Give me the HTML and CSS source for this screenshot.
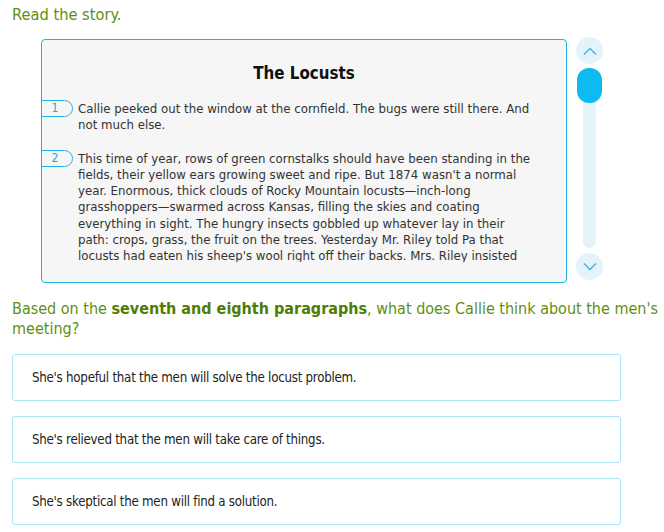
FILE: index.html
```html
<!DOCTYPE html>
<html>
<head>
<meta charset="utf-8">
<link rel="stylesheet" href="styles.css">
</head>
<body>
<div class="page">
  <p class="prompt">Read the story.</p>
  <div class="reader">
    <div class="passage">
      <div class="passage-scroll">
        <h2 class="title">The Locusts</h2>
        <div class="para">
          <span class="num">1</span>
          <p class="para-text">Callie peeked out the window at the cornfield. The bugs were still there. And not much else.</p>
        </div>
        <div class="para">
          <span class="num">2</span>
          <p class="para-text">This time of year, rows of green cornstalks should have been standing in the fields, their yellow ears growing sweet and ripe. But 1874 wasn't a normal year. Enormous, thick clouds of Rocky Mountain locusts—inch-long grasshoppers—swarmed across Kansas, filling the skies and coating everything in sight. The hungry insects gobbled up whatever lay in their path: crops, grass, the fruit on the trees. Yesterday Mr. Riley told Pa that locusts had eaten his sheep's wool right off their backs. Mrs. Riley insisted</p>
        </div>
      </div>
    </div>
    <div class="scroller">
      <button class="scroll-btn" aria-label="Scroll up">
        <svg width="14" height="8" viewBox="0 0 14 8"><path d="M1 7.5 L7 1.5 L13 7.5" fill="none" stroke="#3fb2e6" stroke-width="1.4"/></svg>
      </button>
      <div class="track"><div class="thumb"></div></div>
      <button class="scroll-btn" aria-label="Scroll down">
        <svg width="14" height="8" viewBox="0 0 14 8"><path d="M1 0.5 L7 6.5 L13 0.5" fill="none" stroke="#3fb2e6" stroke-width="1.4"/></svg>
      </button>
    </div>
  </div>
  <p class="question">Based on the <b>seventh and eighth paragraphs</b>, what does Callie think about the men's meeting?</p>
  <div class="choices">
    <div class="choice">She's hopeful that the men will solve the locust problem.</div>
    <div class="choice">She's relieved that the men will take care of things.</div>
    <div class="choice">She's skeptical the men will find a solution.</div>
  </div>
</div>
</body>
</html>
```

FILE: styles.css
```css
* { box-sizing: border-box; }
html, body { margin: 0; padding: 0; background: #fff; }
body { font-family: "DejaVu Sans Condensed", "DejaVu Sans", sans-serif; }
.page { padding: 5px 6px 0 12px; width: 664px; }
.prompt {
  margin: 0;
  font-size: 16.3px;
  line-height: 20px;
  color: #5f8f0f;
}
.reader {
  display: flex;
  margin-top: 14px;
  margin-left: 29px;
}
.passage {
  width: 526px;
  height: 244px;
  border: 1px solid #1fb4e8;
  border-radius: 4px;
  background: #f6f6f6;
  padding: 22px 0 20px 0;
}
.passage-scroll {
  height: 200px;
  overflow: hidden;
}
.title {
  margin: 0 0 17px 0;
  text-align: center;
  font-size: 16.8px;
  line-height: 22px;
  font-weight: bold;
  color: #111;
}
.para {
  display: flex;
  align-items: flex-start;
  margin-bottom: 17px;
}
.num {
  flex: none;
  width: 32px;
  height: 17px;
  margin-left: -1px;
  margin-top: -1px;
  border: 1px solid #1fb4e8;
  border-radius: 0 9px 9px 0;
  color: #1fa8e0;
  font-size: 12px;
  line-height: 15px;
  text-align: center;
  padding-right: 4px;
  background: #f6f6f6;
}
.para-text {
  margin: 0 0 0 5px;
  width: 460px;
  font-size: 13.1px;
  line-height: 16.3px;
  color: #333;
}
.scroller {
  display: flex;
  flex-direction: column;
  align-items: center;
  margin-left: 9px;
  width: 27px;
  margin-top: -2px;
}
.scroll-btn {
  width: 27px;
  height: 27px;
  border-radius: 50%;
  border: 0;
  padding: 0;
  background: #e4f3fa;
  display: flex;
  align-items: center;
  justify-content: center;
}
.track {
  width: 13px;
  height: 180px;
  margin: 4px 0 5px 0;
  background: #e4f3fa;
  border-radius: 7px;
  display: flex;
  justify-content: center;
}
.thumb {
  flex: none;
  width: 25px;
  height: 35px;
  border-radius: 12px;
  background: #0dbbf2;
}
.question {
  margin: 16px 0 0 0;
  font-size: 16px;
  line-height: 20px;
  color: #5f8f0f;
}
.question b { color: #4e7d05; }
.choices {
  margin-top: 15px;
  display: flex;
  flex-direction: column;
  gap: 15px;
  width: 609px;
}
.choice {
  height: 47px;
  border: 1px solid #abe3f6;
  border-radius: 3px;
  padding: 0 19px;
  display: flex;
  align-items: center;
  font-size: 13.2px;
  letter-spacing: -0.25px;
  color: #222;
}
```
